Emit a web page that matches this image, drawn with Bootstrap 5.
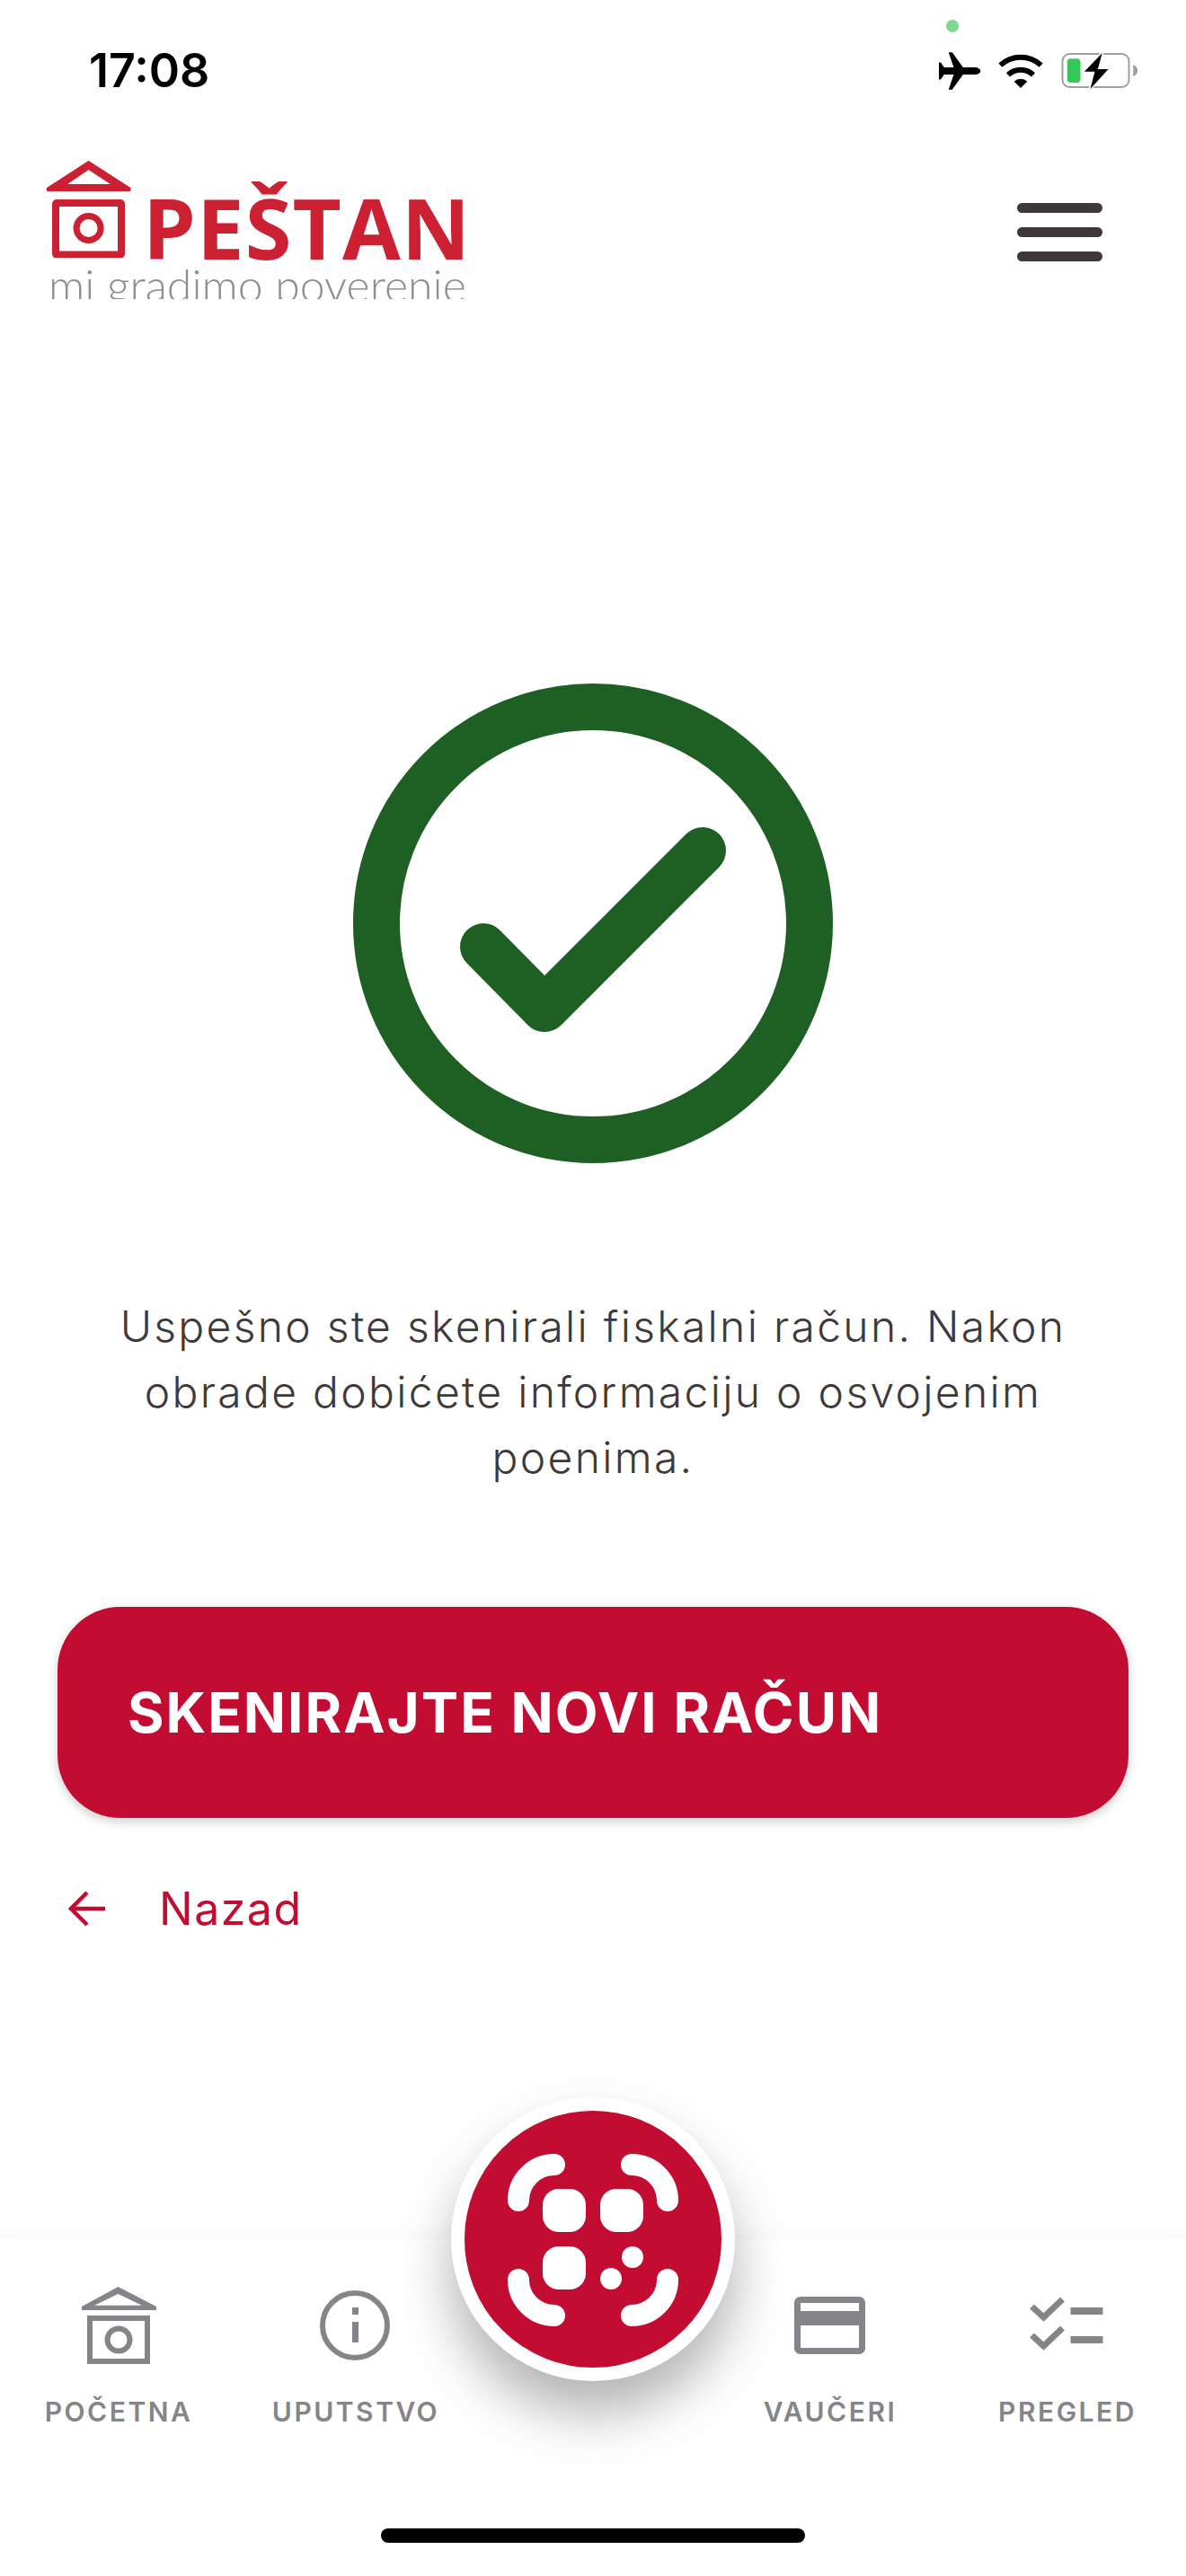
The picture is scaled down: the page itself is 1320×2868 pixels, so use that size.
<!DOCTYPE html>
<html lang="sr">
<head>
  <meta charset="UTF-8">
  <title>Pestan – skeniranje računa</title>
  <meta name="viewport" content="width=device-width, initial-scale=1.0" />
  <link href="https://cdn.jsdelivr.net/npm/bootstrap@5.3.2/dist/css/bootstrap.min.css" rel="stylesheet" />
  <style>
    body {
      font-family: 'Inter', sans-serif;
      background-color: #fff;
    }
    .phone-shell {
      width: 1320px;
      height: 2868px;
      overflow: hidden;
    }
    .status-row {
      height: 158px;
      padding: 0 53px 0 99px;
    }
    .status-icons {
      gap: 19px;
    }
    .status-time {
      font-size: 52px;
      font-weight: 600;
      color: #000;
    }
    .camera-dot {
      top: 22px;
      left: 1053px;
      width: 14px;
      height: 14px;
      background: #7ad98f;
    }
    .top-bar {
      margin-top: 21px;
      height: 158px;
      padding: 0 93px 0 50px;
    }
    .brand-word {
      font-family: 'Open Sans', sans-serif;
      font-weight: 700;
      font-size: 94px;
      letter-spacing: 1px;
      line-height: 67px;
      color: #cc2033;
      margin-left: 9px;
    }
    .brand-tag {
      font-family: 'Lato', sans-serif;
      font-weight: 300;
      font-size: 50px;
      line-height: 44px;
      height: 46px;
      padding-top: 8px;
      margin-left: 4px;
      color: #8f8f8f;
      overflow: hidden;
      white-space: nowrap;
    }
    .menu-line {
      width: 95px;
      height: 11px;
      border-radius: 6px;
      background: #3e3838;
    }
    .menu-btn {
      gap: 16px;
    }
    .result-area {
      padding: 424px 64px 0;
    }
    .result-icon {
      width: 534px;
      height: 534px;
    }
    .result-text {
      margin: 145px 0 130px;
      padding: 0 60px;
      font-size: 48px;
      font-weight: 300;
      line-height: 73px;
      letter-spacing: 2.300px;
      color: #3f3a3a;
    }
    .scan-again {
      height: 235px;
      padding: 0 78px;
      border-radius: 70px;
      background: #c20c31;
      color: #fff;
      font-size: 62px;
      font-weight: 700;
      letter-spacing: 2px;
      box-shadow: 0 4px 12px rgba(0,0,0,0.2);
    }
    .back-link {
      margin-top: 71px;
      padding-left: 12px;
      gap: 60px;
      color: #c20c31;
      font-size: 50px;
      line-height: 60px;
      letter-spacing: 1.500px;
      text-decoration: none;
    }
    .tab-bar {
      height: 375px;
      background: #fff;
      box-shadow: 0 -6px 20px rgba(0,0,0,0.025);
    }
    .tab-item {
      padding-top: 52px;
      color: #858589;
      font-size: 30px;
      font-weight: 600;
      letter-spacing: 2.500px;
      text-decoration: none;
    }
    .tab-item svg {
      width: 90px;
      height: 90px;
      margin-bottom: 28px;
    }
    .scan-fab {
      top: -158px;
      left: 502px;
      width: 316px;
      height: 316px;
      border: 15px solid #fff;
      background: #c20c31;
      box-shadow: 0 36px 60px rgba(0,0,0,0.3);
    }
    .home-indicator {
      width: 472px;
      height: 16px;
      margin-bottom: 37px;
      background: #000;
      border-radius: 8px;
    }
  </style>
</head>
<body class="m-0">
  <div class="phone-shell position-relative d-flex flex-column mx-auto">

    <div class="status-row d-flex justify-content-between align-items-center">
      <span class="status-time">17:08</span>
      <span class="status-icons d-flex align-items-center">
        <svg width="47" height="42" viewBox="254 178 140 124"><path fill="#000" d="M392 240c0-7-9-12-20-12h-38l-36-50h-12l17 50h-32l-11-16h-6v56h6l11-16h32l-17 50h12l36-50h38c11 0 20-5 20-12z"/></svg>
        <svg width="50" height="38" viewBox="457 178 150 114"><path d="M464 216a100 100 0 0 1 136 0M490 248a62 62 0 0 1 84 0" fill="none" stroke="#000" stroke-width="18"/><path d="M510 270a32 32 0 0 1 44 0l-22 22z" fill="#000"/></svg>
        <svg width="87" height="42" viewBox="660 175 260 126">
          <rect x="667" y="181" width="222" height="111" rx="24" fill="none" stroke="#a0a0a0" stroke-width="6"/>
          <rect x="683" y="197" width="44" height="80" rx="12" fill="#34c759"/>
          <path d="M903 218c9 3 15 10 15 19s-6 16-15 19z" fill="#a0a0a0"/>
          <path d="M800 178l-60 62h35l-15 58 60-66h-35z" fill="#000" stroke="#fff" stroke-width="10" paint-order="stroke"/>
        </svg>
      </span>
    </div>
    <span class="camera-dot position-absolute rounded-circle"></span>

    <header class="top-bar d-flex justify-content-between align-items-center">
      <div class="align-self-start">
        <div class="d-flex align-items-end">
          <svg width="100" height="108" viewBox="50 179 100 108">
            <path fill="#cc2033" fill-rule="evenodd" stroke="#cc2033" stroke-width="2" stroke-linejoin="round" d="M98.600 180L144.500 209.500V212H53V209.500ZM98.600 188L72 206H126Z"/>
            <rect x="62" y="226" width="73" height="57.500" rx="1" fill="none" stroke="#cc2033" stroke-width="8"/>
            <circle cx="98.600" cy="254" r="13.500" fill="none" stroke="#cc2033" stroke-width="7"/>
          </svg>
          <span class="brand-word">PEŠTAN</span>
        </div>
        <div class="brand-tag">mi gradimo poverenie</div>
      </div>
      <button type="button" class="menu-btn btn border-0 p-0 d-flex flex-column" aria-label="Meni">
        <span class="menu-line"></span>
        <span class="menu-line"></span>
        <span class="menu-line"></span>
      </button>
    </header>

    <main class="result-area flex-grow-1 d-flex flex-column">
      <svg class="result-icon align-self-center" viewBox="0 0 534 534">
        <circle cx="267" cy="267" r="241" fill="none" stroke="#1e5f23" stroke-width="52"/>
        <path d="M145 293L213 362L389 186" fill="none" stroke="#1e5f23" stroke-width="52" stroke-linecap="round" stroke-linejoin="round"/>
      </svg>
      <p class="result-text text-center">Uspešno ste skenirali fiskalni račun. Nakon obrade dobićete informaciju o osvojenim poenima.</p>
      <button type="button" class="scan-again btn border-0 text-start">SKENIRAJTE NOVI RAČUN</button>
      <a href="#" class="back-link d-flex align-items-center">
        <svg width="41" height="40" viewBox="0 0 41 40"><path d="M41 20H3M21 2L3 20L21 38" fill="none" stroke="#c20c31" stroke-width="4.500"/></svg>
        <span>Nazad</span>
      </a>
    </main>

    <nav class="tab-bar position-relative d-flex flex-column">
      <div class="row g-0 text-center">
        <a href="#" class="tab-item col d-flex flex-column align-items-center">
          <svg viewBox="0 0 90 90">
            <path fill="#858589" fill-rule="evenodd" d="M44.500 1L87 23V27H4V23ZM44.500 9L18 21.700H71Z"/>
            <rect x="13" y="36" width="64" height="48" fill="none" stroke="#858589" stroke-width="6"/>
            <circle cx="45" cy="60" r="12.500" fill="none" stroke="#858589" stroke-width="6"/>
          </svg>
          POČETNA
        </a>
        <a href="#" class="tab-item col d-flex flex-column align-items-center">
          <svg viewBox="0 0 90 90">
            <circle cx="44" cy="44" r="36" fill="none" stroke="#858589" stroke-width="6"/>
            <rect x="41" y="24" width="7" height="8" fill="#858589"/>
            <rect x="41" y="40" width="7" height="23" fill="#858589"/>
          </svg>
          UPUTSTVO
        </a>
        <div class="col"></div>
        <a href="#" class="tab-item col d-flex flex-column align-items-center">
          <svg viewBox="0 0 90 90">
            <rect x="8.500" y="15.500" width="72" height="57" rx="3" fill="none" stroke="#858589" stroke-width="7"/>
            <rect x="8" y="28" width="73" height="16" fill="#858589"/>
          </svg>
          VAUČERI
        </a>
        <a href="#" class="tab-item col d-flex flex-column align-items-center">
          <svg viewBox="0 0 90 90">
            <path d="M5.500 23L18.500 35L39.500 15M5.500 55L18.500 67L39.500 47" fill="none" stroke="#858589" stroke-width="7"/>
            <rect x="48.500" y="24" width="36" height="8" fill="#858589"/>
            <rect x="48.500" y="56" width="36" height="8" fill="#858589"/>
          </svg>
          PREGLED
        </a>
      </div>
      <button type="button" class="scan-fab btn p-0 position-absolute rounded-circle d-flex align-items-center justify-content-center" aria-label="Skeniraj">
        <svg width="286" height="286" viewBox="0 0 286 286">
          <path d="M60 100a40 40 0 0 1 40-40M186 60a40 40 0 0 1 40 40M60 188a40 40 0 0 0 40 40M186 228a40 40 0 0 0 40-40" fill="none" stroke="#fff" stroke-width="24" stroke-linecap="round"/>
          <rect x="87" y="87" width="48" height="48" rx="18" fill="#fff"/>
          <rect x="151" y="87" width="48" height="48" rx="18" fill="#fff"/>
          <rect x="87" y="151" width="48" height="48" rx="18" fill="#fff"/>
          <circle cx="187" cy="163" r="12" fill="#fff"/>
          <circle cx="163" cy="187" r="12" fill="#fff"/>
        </svg>
      </button>
      <span class="home-indicator mt-auto mx-auto"></span>
    </nav>
  </div>
  <script src="https://cdn.jsdelivr.net/npm/bootstrap@5.3.2/dist/js/bootstrap.bundle.min.js"></script>
</body>
</html>
